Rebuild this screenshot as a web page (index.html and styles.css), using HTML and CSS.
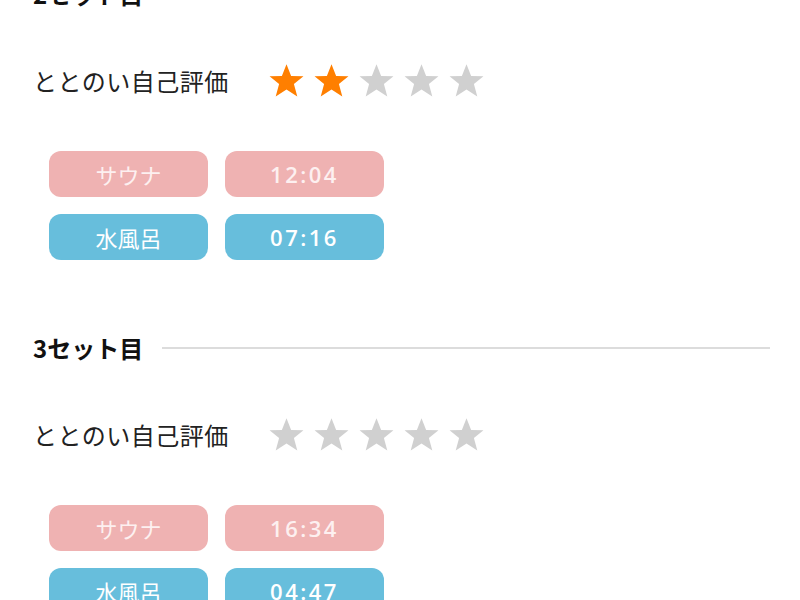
FILE: index.html
```html
<!DOCTYPE html>
<html>
<head>
    <link rel="stylesheet" href="styles.css">
</head>
<body>
    <div class="page">
        <section class="set">
            <div class="set-header">
                <h2 class="set-title">2セット目</h2>
                <div class="set-line"></div>
            </div>
            <div class="rating">
                <span class="rating-label">ととのい自己評価</span>
                <div class="stars">
                    <svg class="star on" viewBox="0 0 24 24"><polygon points="12,1.5 15,9 23,9.3 16.8,14.3 19,22.3 12,17.8 5,22.3 7.2,14.3 1,9.3 9,9"/></svg>
                    <svg class="star on" viewBox="0 0 24 24"><polygon points="12,1.5 15,9 23,9.3 16.8,14.3 19,22.3 12,17.8 5,22.3 7.2,14.3 1,9.3 9,9"/></svg>
                    <svg class="star" viewBox="0 0 24 24"><polygon points="12,1.5 15,9 23,9.3 16.8,14.3 19,22.3 12,17.8 5,22.3 7.2,14.3 1,9.3 9,9"/></svg>
                    <svg class="star" viewBox="0 0 24 24"><polygon points="12,1.5 15,9 23,9.3 16.8,14.3 19,22.3 12,17.8 5,22.3 7.2,14.3 1,9.3 9,9"/></svg>
                    <svg class="star" viewBox="0 0 24 24"><polygon points="12,1.5 15,9 23,9.3 16.8,14.3 19,22.3 12,17.8 5,22.3 7.2,14.3 1,9.3 9,9"/></svg>
                </div>
            </div>
            <div class="times">
                <div class="pill sauna">サウナ</div>
                <div class="pill sauna num">12:04</div>
                <div class="pill water">水風呂</div>
                <div class="pill water num">07:16</div>
            </div>
        </section>

        <section class="set">
            <div class="set-header">
                <h2 class="set-title">3セット目</h2>
                <div class="set-line"></div>
            </div>
            <div class="rating">
                <span class="rating-label">ととのい自己評価</span>
                <div class="stars">
                    <svg class="star" viewBox="0 0 24 24"><polygon points="12,1.5 15,9 23,9.3 16.8,14.3 19,22.3 12,17.8 5,22.3 7.2,14.3 1,9.3 9,9"/></svg>
                    <svg class="star" viewBox="0 0 24 24"><polygon points="12,1.5 15,9 23,9.3 16.8,14.3 19,22.3 12,17.8 5,22.3 7.2,14.3 1,9.3 9,9"/></svg>
                    <svg class="star" viewBox="0 0 24 24"><polygon points="12,1.5 15,9 23,9.3 16.8,14.3 19,22.3 12,17.8 5,22.3 7.2,14.3 1,9.3 9,9"/></svg>
                    <svg class="star" viewBox="0 0 24 24"><polygon points="12,1.5 15,9 23,9.3 16.8,14.3 19,22.3 12,17.8 5,22.3 7.2,14.3 1,9.3 9,9"/></svg>
                    <svg class="star" viewBox="0 0 24 24"><polygon points="12,1.5 15,9 23,9.3 16.8,14.3 19,22.3 12,17.8 5,22.3 7.2,14.3 1,9.3 9,9"/></svg>
                </div>
            </div>
            <div class="times">
                <div class="pill sauna">サウナ</div>
                <div class="pill sauna num">16:34</div>
                <div class="pill water">水風呂</div>
                <div class="pill water num">04:47</div>
            </div>
        </section>
    </div>
</body>
</html>
```

FILE: styles.css
```css
body {
    margin: 0;
    background: #fff;
    font-family: "Noto Sans CJK JP", "Noto Sans", sans-serif;
    color: #222;
}

.page {
    margin-top: -18px;
    padding: 0 30px 0 33px;
}

.set {
    padding-bottom: 76px;
}

.set-header {
    display: flex;
    align-items: center;
    gap: 19px;
    height: 24px;
}

.set-title {
    margin: 0;
    font-size: 24px;
    font-weight: 700;
    line-height: 24px;
    color: #111;
    white-space: nowrap;
}

.set-line {
    flex: 1;
    height: 2px;
    background: #dcdcdc;
}

.rating {
    display: flex;
    align-items: center;
    height: 40px;
    margin-top: 54px;
}

.rating-label {
    font-size: 24px;
    letter-spacing: 0.5px;
    width: 235px;
}

.stars {
    display: flex;
    gap: 8px;
}

.star {
    width: 37px;
    height: 37px;
    fill: #d0d0d0;
}

.star.on {
    fill: #ff7f00;
}

.times {
    display: grid;
    grid-template-columns: 159px 159px;
    grid-auto-rows: 46px;
    gap: 17px;
    margin-top: 51px;
    padding-left: 16px;
}

.pill {
    display: flex;
    align-items: center;
    justify-content: center;
    border-radius: 12px;
    color: #fff;
    font-size: 22px;
}

.pill.num {
    font-family: "Open Sans", sans-serif;
    font-weight: 600;
    letter-spacing: 2.5px;
}

.sauna {
    background: #efb2b2;
    color: #fdf0f0;
}

.water {
    background: #67bedc;
}
```
